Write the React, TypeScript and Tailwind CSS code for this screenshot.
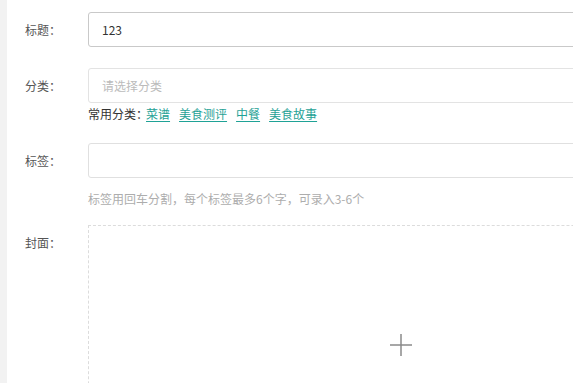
import React from "react";

const links = ["菜谱", "美食测评", "中餐", "美食故事"];

function Label({ children }: { children: React.ReactNode }) {
  return (
    <div className="w-[63px] shrink-0 text-[12px] leading-[35px] text-[#555]">
      {children}
    </div>
  );
}

export default function App() {
  return (
    <div
      className="flex h-[383px] w-full overflow-hidden bg-white"
      style={{ fontFamily: '"Noto Sans CJK SC", "Noto Sans", sans-serif' }}
    >
      <div className="w-[7px] shrink-0 bg-[#f2f2f2]" />
      <div className="flex-1 overflow-hidden pl-[18px] pt-[12px]">
        {/* 标题 */}
        <div className="flex">
          <Label>标题：</Label>
          <div className="flex h-[35px] w-[520px] shrink-0 items-center rounded-[3px] border border-[#c9c9c9] px-[13px] text-[12px] text-[#333]">
            123
          </div>
        </div>

        {/* 分类 */}
        <div className="mt-[21px] flex">
          <Label>分类：</Label>
          <div className="w-[520px] shrink-0">
            <div className="flex h-[35px] items-center rounded-[3px] border border-[#e3e3e3] px-[13px] text-[12px] text-[#bbb]">
              请选择分类
            </div>
            <div className="mt-[2px] flex h-[18px] items-center text-[12px] text-[#333]">
              <span className="mr-[-2px]">常用分类：</span>
              {links.map((l) => (
                <a
                  key={l}
                  href="#"
                  className="mr-[9px] text-[#1fa296] underline underline-offset-2"
                >
                  {l}
                </a>
              ))}
            </div>
          </div>
        </div>

        {/* 标签 */}
        <div className="mt-[20px] flex">
          <Label>标签：</Label>
          <div className="w-[520px] shrink-0">
            <div className="h-[35px] rounded-[3px] border border-[#e0e0e0]" />
            <div className="mt-[12px] text-[12px] leading-[18px] text-[#adadad]">
              标签用回车分割，每个标签最多6个字，可录入3-6个
            </div>
          </div>
        </div>

        {/* 封面 */}
        <div className="mt-[17px] flex">
          <div className="w-[63px] shrink-0 pt-[9px] text-[12px] text-[#555]">封面：</div>
          <div className="flex h-[240px] w-[626px] shrink-0 items-center justify-center border border-dashed border-[#dcdcdc]">
            <svg width="24" height="24" viewBox="0 0 24 24" fill="none">
              <path d="M12 1v22M1 12h22" stroke="#8a8a8a" strokeWidth="1.5" />
            </svg>
          </div>
        </div>
      </div>
    </div>
  );
}
